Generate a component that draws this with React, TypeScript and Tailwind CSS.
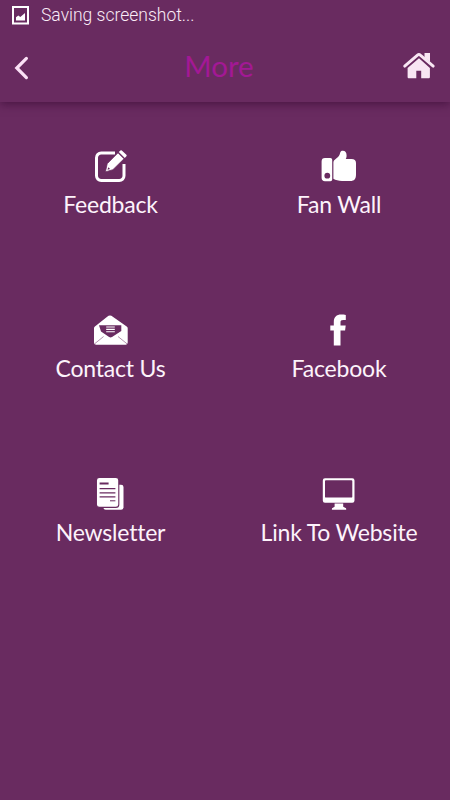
import React from 'react';

const FeedbackIcon = () => (
  <svg viewBox="0 0 50 50" className="w-[50px] h-[50px]" fill="none">
    <path d="M30 13H16.2a4.7 4.7 0 0 0-4.7 4.7v18.1a4.7 4.7 0 0 0 4.7 4.7h18.1a4.7 4.7 0 0 0 4.7-4.7V24" stroke="#fff" strokeWidth="3" />
    <path d="M20.4 31.9l1.8-8.2L33 12.8l6 6-11.1 10.9z" fill="#fff" stroke="#692b60" strokeWidth=".8" />
    <path d="M33.8 12.1l1.6-1.5a1 1 0 0 1 1.4 0l4.6 4.2a1 1 0 0 1 0 1.4L39.8 18z" fill="#fff" />
    <path d="M23.3 27.2l1.8 1.8-2.6.8z" fill="#692b60" />
  </svg>
);

const ThumbIcon = () => (
  <svg viewBox="0 0 50 50" className="w-[50px] h-[50px]" fill="#fff">
    <path
      fillRule="evenodd"
      d="M11 18h5.4a1.8 1.8 0 0 1 1.8 1.8v19.6a1.8 1.8 0 0 1-1.8 1.8H11a3.4 3.4 0 0 1-3.4-3.4V21.4A3.4 3.4 0 0 1 11 18zM13.3 32.8a2.9 2.9 0 1 0 0 5.8 2.9 2.9 0 0 0 0-5.8z"
    />
    <path d="M19.4 22.6c0-2 1.2-3 2.8-4.2 2.4-1.7 3.5-3.2 3.9-5.4.3-1.6 1.3-2.2 2.7-2.2 2.5 0 3.8 1.8 3.8 4.7 0 1.5-.3 2.5-.8 3.6h5.7c2.9 0 4.5 1.3 4.5 3.8v11.5c0 4.5-1.8 6.5-5.6 6.5H28c-3.5 0-6.4-.8-8.6-2.1z" />
  </svg>
);

const EnvelopeIcon = () => (
  <svg viewBox="0 0 50 50" className="w-[50px] h-[50px]">
    <path
      d="M9 24.3c0-.8.3-1.4.9-1.9l12.3-9.7a4.5 4.5 0 0 1 5.6 0l13.9 9.7c.7.5 1 1.1 1 1.9v14.2c0 1.2-.9 2.2-2.1 2.2H11a2.1 2.1 0 0 1-2-2.2z"
      fill="#fff"
    />
    <path d="M14 21.2h22.3V27L27 33a2.6 2.6 0 0 1-2.9 0L16 27.6z" fill="#692b60" />
    <path d="M21.2 23h8.6M21.2 25.4h8.6M21.2 27.8h8.6" stroke="#fff" strokeWidth="1.1" />
    <path d="M9.6 39.8l9-7.3M42 39.8l-9-7.3" stroke="#9e7598" strokeWidth=".8" />
  </svg>
);

const FacebookIcon = () => (
  <svg viewBox="0 0 50 50" className="w-[50px] h-[50px]" fill="#fff">
    <path d="M19.8 41.6V26.4h-3.5v-5h3.5v-3.2c0-5.1 2.6-7.6 7.5-7.6 1.8 0 3 .1 4.5.3v5.2h-2.5c-2.2 0-2.8.8-2.8 2.4v2.9h5.2l-.6 5h-4.6v15.2z" />
  </svg>
);

const NewsletterIcon = () => (
  <svg viewBox="0 0 50 50" className="w-[50px] h-[50px]">
    <rect x="18.3" y="16.7" width="20.2" height="25" rx="2.4" fill="#fff" />
    <rect x="11.4" y="9.4" width="22.4" height="30" rx="3" fill="#fff" stroke="#692b60" strokeWidth="1.1" />
    <path d="M14.6 15.5h9" stroke="#692b60" strokeWidth="2" />
    <path d="M14.6 20.7h15.8M14.6 24.8h15.8M14.6 28.8h15.8" stroke="#692b60" strokeWidth="1.3" />
    <path d="M25 32.8h5.4" stroke="#692b60" strokeWidth="1" />
  </svg>
);

const MonitorIcon = () => (
  <svg viewBox="0 0 50 50" className="w-[50px] h-[50px]" fill="#fff">
    <path
      fillRule="evenodd"
      d="M11 10.3h27.3a2.2 2.2 0 0 1 2.2 2.2v20a2.2 2.2 0 0 1-2.2 2.2H11a2.2 2.2 0 0 1-2.2-2.2v-20a2.2 2.2 0 0 1 2.2-2.2zm.9 1.9c-.5 0-.9.4-.9.9v15.6c0 .5.4.9.9.9h25.5c.5 0 .9-.4.9-.9V13.1c0-.5-.4-.9-.9-.9z"
    />
    <path d="M20.6 35.6h8.6v3.2l2.4 1.2c.4.2.6.5.6.9v.9H17.9v-.9c0-.4.2-.7.6-.9l2.1-1.2z" />
  </svg>
);

const HomeIcon = () => (
  <svg viewBox="0 0 50 45" className="w-[50px] h-[45px]" fill="#f8e6f3">
    <path d="M24 14.2L12.6 24v8.9c0 .9.5 1.4 1.4 1.4h7.3v-7.6h4.9v7.6h7.3c.9 0 1.4-.5 1.4-1.4V24z" />
    <path d="M29.5 9.1H35v9.2l-5.5-4.7z" />
    <path d="M9.8 23.2l12.6-11a2.2 2.2 0 0 1 3 0l12.7 11" fill="none" stroke="#692b60" strokeWidth="3.4" />
    <path d="M9.7 22.1l12.8-11a2.1 2.1 0 0 1 2.8 0l12.9 11" fill="none" stroke="#f8e6f3" strokeWidth="2.9" strokeLinecap="round" strokeLinejoin="round" />
  </svg>
);

const items = [
  { label: 'Feedback', icon: <FeedbackIcon /> },
  { label: 'Fan Wall', icon: <ThumbIcon /> },
  { label: 'Contact Us', icon: <EnvelopeIcon /> },
  { label: 'Facebook', icon: <FacebookIcon /> },
  { label: 'Newsletter', icon: <NewsletterIcon /> },
  { label: 'Link To Website', icon: <MonitorIcon /> },
];

const App: React.FC = () => {
  return (
    <div className="w-[450px] h-[800px] overflow-hidden bg-[#692b60] font-[Lato,sans-serif] text-white">
      {/* Header */}
      <header className="h-[102px] shadow-[0_2px_9px_rgba(50,5,45,0.6)]">
        <div className="flex items-center h-[30px] pl-3 font-[Roboto,sans-serif]">
          <svg viewBox="0 0 18 20" className="w-[18px] h-5" fill="none">
            <rect x="1" y="2" width="15" height="16.5" stroke="#fff" strokeWidth="2" />
            <path d="M4 15.5v-3.2l2.3-1.8 2 1.6 4.7-4v7.4z" fill="#fff" />
          </svg>
          <span className="ml-[11px] text-[17.5px] font-light text-[#faecf7]">Saving screenshot...</span>
        </div>
        <div className="flex items-center justify-between h-[72px]">
          <button className="w-[64px] pt-1 pl-3" aria-label="Back">
            <svg viewBox="0 0 20 26" className="w-5 h-[26px]" fill="none">
              <path d="M14.4 3.4L4.8 13l9.6 9.6" stroke="#fbe1f6" strokeWidth="3.2" strokeLinecap="round" />
            </svg>
          </button>
          <h1 className="text-[29.5px] leading-9 font-normal text-[#a31895]">More</h1>
          <button className="w-[76px] pl-[21px]" aria-label="Home">
            <HomeIcon />
          </button>
        </div>
      </header>

      {/* Menu grid */}
      <main className="grid grid-cols-[220px_237px] auto-rows-[164px] pt-[38px]">
        {items.map((item) => (
          <button key={item.label} className="flex flex-col items-center justify-start">
            {item.icon}
            <span className="pl-px text-[23px] leading-7 tracking-[-0.2px] whitespace-nowrap text-[#fdf3fb]">
              {item.label}
            </span>
          </button>
        ))}
      </main>
    </div>
  );
};

export default App;
